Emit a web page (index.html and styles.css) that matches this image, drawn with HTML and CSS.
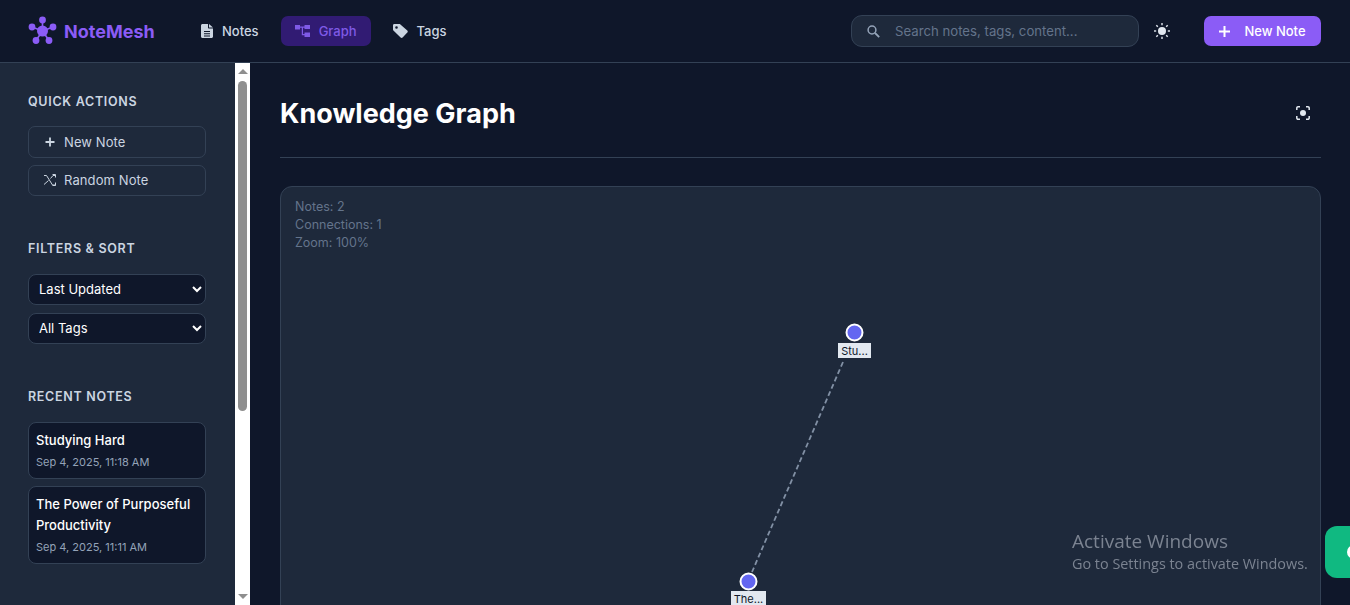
FILE: index.html
```html
<!DOCTYPE html>
<html lang="en">
<head>
    <meta charset="UTF-8">
    <meta name="viewport" content="width=device-width, initial-scale=1.0">
    <title>NoteMesh - Knowledge Graph</title>
    <link rel="stylesheet" href="styles.css">
</head>
<body>
    <header class="topbar">
        <a class="brand" href="#">
            <svg class="brand-icon" viewBox="0 0 30 30" width="30" height="30">
                <g stroke="#8b5cf6" stroke-width="1.6">
                    <line x1="14.5" y1="15" x2="14.5" y2="4"/>
                    <line x1="14.5" y1="15" x2="4" y2="11"/>
                    <line x1="14.5" y1="15" x2="25" y2="11"/>
                    <line x1="14.5" y1="15" x2="8" y2="24.5"/>
                    <line x1="14.5" y1="15" x2="21" y2="24.5"/>
                </g>
                <g fill="#8b5cf6">
                    <circle cx="14.5" cy="15" r="5.5"/>
                    <circle cx="14.5" cy="4" r="3.4"/>
                    <circle cx="4" cy="11" r="3.4"/>
                    <circle cx="25" cy="11" r="3.4"/>
                    <circle cx="8" cy="24.5" r="3.4"/>
                    <circle cx="21" cy="24.5" r="3.4"/>
                </g>
            </svg>
            <span>NoteMesh</span>
        </a>
        <nav class="nav">
            <a class="nav-link" href="#">
                <svg width="12" height="14" viewBox="0 0 12 14"><path fill="currentColor" fill-rule="evenodd" d="M1.5 0H7v3.5c0 .6.4 1 1 1h4v8c0 .8-.7 1.5-1.5 1.5h-9C.7 14 0 13.300 0 12.500v-11C0 .7.700 0 1.500 0zM8 0l4 3.500H8zM3 7v1h6V7zm0 2.200v1h6v-1zm0 2.200v1h6v-1z"/></svg>
                Notes
            </a>
            <a class="nav-link active" href="#">
                <svg width="15" height="12" viewBox="0 0 15 12"><path fill="currentColor" d="M0 0h5v4.500H0zM9.500 0H15v4H9.500zM9.500 7.500H15V12H9.500zM5 1.500h4.500v1.300H8V9h1.500v1.300H6.800V2.800H5z"/></svg>
                Graph
            </a>
            <a class="nav-link" href="#">
                <svg width="15" height="14" viewBox="0 0 15 14"><path fill="currentColor" fill-rule="evenodd" d="M0 1.300C0 .6.600 0 1.300 0h5.100c.4 0 .7.100 1 .400l6.900 6.200c.6.600.6 1.500 0 2l-4.700 4.900c-.6.600-1.500.6-2 0L.4 6.600C.1 6.300 0 6 0 5.600zM3.500 2.200a1.300 1.300 0 1 0 0 2.600 1.300 1.300 0 0 0 0-2.600z"/></svg>
                Tags
            </a>
        </nav>
        <div class="topbar-right">
            <label class="search">
                <svg width="13" height="13" viewBox="0 0 13 13"><circle cx="5" cy="5" r="3.900" fill="none" stroke="#94a3b8" stroke-width="1.500"/><line x1="8" y1="8" x2="12.200" y2="12.200" stroke="#94a3b8" stroke-width="1.800"/></svg>
                <input type="text" placeholder="Search notes, tags, content...">
            </label>
            <button class="icon-btn theme-btn" type="button">
                <svg width="16" height="16" viewBox="0 0 16 16">
                    <circle cx="8" cy="8" r="4" fill="#e2e8f0"/>
                    <g stroke="#e2e8f0" stroke-width="1.400">
                        <line x1="8" y1="0" x2="8" y2="2.200"/><line x1="8" y1="13.800" x2="8" y2="16"/>
                        <line x1="0" y1="8" x2="2.200" y2="8"/><line x1="13.800" y1="8" x2="16" y2="8"/>
                        <line x1="2.300" y1="2.300" x2="3.800" y2="3.800"/><line x1="12.200" y1="12.200" x2="13.700" y2="13.700"/>
                        <line x1="2.300" y1="13.700" x2="3.800" y2="12.200"/><line x1="12.200" y1="3.800" x2="13.700" y2="2.300"/>
                    </g>
                </svg>
            </button>
            <button class="new-note" type="button">
                <svg width="11" height="11" viewBox="0 0 11 11"><path stroke="#fff" stroke-width="2" d="M5.500 0v11M0 5.500h11"/></svg>
                New Note
            </button>
        </div>
    </header>

    <div class="layout">
        <aside class="sidebar">
            <div class="sidebar-body">
                <section class="side-section">
                    <h3>Quick Actions</h3>
                    <div class="side-stack">
                        <button class="side-btn" type="button">
                            <svg width="12" height="12" viewBox="-1.500 -1.500 12 12"><path stroke="#cbd5e1" stroke-width="1.800" d="M4.500 0v9M0 4.500h9"/></svg>
                            New Note
                        </button>
                        <button class="side-btn" type="button">
                            <svg width="12" height="12" viewBox="0 0 12 12"><path fill="none" stroke="#cbd5e1" stroke-width="1" d="M0 1.500h2.500l6 9.500H11.500M0 10.500l4.500-4M6.500 4.500L9 1.500h2.500M8.500 .5h3v3M8.500 11.500h3v-3"/></svg>
                            Random Note
                        </button>
                    </div>
                </section>
                <section class="side-section">
                    <h3>Filters &amp; Sort</h3>
                    <div class="side-stack filters">
                        <select class="side-select"><option>Last Updated</option></select>
                        <select class="side-select"><option>All Tags</option></select>
                    </div>
                </section>
                <section class="side-section recent">
                    <h3>Recent Notes</h3>
                    <div class="side-stack">
                        <div class="recent-note">
                            <div class="recent-title">Studying Hard</div>
                            <div class="recent-date">Sep 4, 2025, 11:18 AM</div>
                        </div>
                        <div class="recent-note">
                            <div class="recent-title">The Power of Purposeful Productivity</div>
                            <div class="recent-date">Sep 4, 2025, 11:11 AM</div>
                        </div>
                    </div>
                </section>
            </div>
            <div class="scrollbar">
                <span class="scroll-arrow up"></span>
                <span class="scroll-thumb"></span>
                <span class="scroll-arrow down"></span>
            </div>
        </aside>

        <main class="content">
            <div class="page-head">
                <h1>Knowledge Graph</h1>
                <button class="icon-btn" type="button">
                    <svg width="14" height="14" viewBox="0 0 14 14">
                        <path fill="none" stroke="#e2e8f0" stroke-width="1.500" d="M.8 4V2A1.200 1.200 0 0 1 2 .8h2M10 .8h2A1.200 1.200 0 0 1 13.200 2v2M13.200 10v2a1.200 1.200 0 0 1-1.200 1.200h-2M4 13.200H2A1.200 1.200 0 0 1 .8 12v-2"/>
                        <circle cx="7" cy="7" r="3" fill="#e2e8f0"/>
                    </svg>
                </button>
            </div>
            <div class="graph-card">
                <div class="graph-stats">
                    <div>Notes: 2</div>
                    <div>Connections: 1</div>
                    <div>Zoom: 100%</div>
                </div>
                <svg class="graph-canvas" width="1040" height="500">
                    <line class="edge" x1="562" y1="175" x2="471" y2="385"/>
                    <g>
                        <circle class="node" cx="573.500" cy="145.500" r="8"/>
                        <rect class="node-label-box" x="557" y="156" width="33" height="15"/>
                        <text class="node-label" x="573.500" y="168">Stu...</text>
                    </g>
                    <g>
                        <circle class="node" cx="467.500" cy="394.500" r="8"/>
                        <rect class="node-label-box" x="450" y="404" width="35" height="15"/>
                        <text class="node-label" x="467.500" y="416">The...</text>
                    </g>
                </svg>
            </div>
        </main>
    </div>

    <div class="activate">
        <div class="activate-title">Activate Windows</div>
        <div>Go to Settings to activate Windows.</div>
    </div>
    <button class="float-chat" type="button"></button>
</body>
</html>
```

FILE: styles.css
```css
* {
    box-sizing: border-box;
}
html, body {
    height: 100%;
}
body {
    margin: 0;
    overflow: hidden;
    font-family: Inter, "Liberation Sans", sans-serif;
    background-color: #0f172a;
    color: #e2e8f0;
    display: flex;
    flex-direction: column;
}
a {
    text-decoration: none;
    color: inherit;
}
button {
    font-family: inherit;
    cursor: pointer;
}

.topbar {
    height: 63px;
    flex-shrink: 0;
    display: flex;
    align-items: center;
    padding: 0 29px 0 28px;
    border-bottom: 1px solid #334155;
}
.brand {
    display: flex;
    align-items: center;
    gap: 6px;
    width: 159px;
    font-size: 18px;
    font-weight: 700;
    color: #8b5cf6;
}
.nav {
    display: flex;
    gap: 8px;
}
.nav-link {
    height: 30px;
    display: flex;
    align-items: center;
    gap: 9px;
    padding: 0 14px;
    border-radius: 7px;
    font-size: 13px;
    font-weight: 500;
    color: #cbd5e1;
}
.nav-link.active {
    background-color: #311b73;
    color: #7f5ae6;
}
.topbar-right {
    margin-left: auto;
    display: flex;
    align-items: center;
}
.search {
    width: 288px;
    height: 32px;
    display: flex;
    align-items: center;
    gap: 13px;
    padding: 0 15px;
    background-color: #1e293b;
    border: 1px solid #334155;
    border-radius: 11px;
}
.search input {
    flex: 1;
    min-width: 0;
    border: none;
    outline: none;
    background: none;
    font-family: inherit;
    font-size: 13.200px;
    color: #e2e8f0;
}
.search input::placeholder {
    color: #64748b;
}
.icon-btn {
    background: none;
    border: none;
    padding: 0;
    display: flex;
}
.theme-btn {
    margin: 0 34px 0 15px;
}
.new-note {
    width: 117px;
    height: 30px;
    display: flex;
    align-items: center;
    justify-content: center;
    gap: 14px;
    border: none;
    border-radius: 7px;
    background-color: #8b5cf6;
    color: #ffffff;
    font-size: 13px;
    font-weight: 500;
}

.layout {
    flex: 1;
    min-height: 0;
    display: flex;
}
.sidebar {
    width: 250px;
    flex-shrink: 0;
    display: flex;
    overflow: hidden;
}
.sidebar-body {
    flex: 1;
    min-width: 0;
    overflow: hidden;
    background-color: #1e293b;
    padding: 30px 29px 0 28px;
}
.scrollbar {
    width: 15px;
    flex-shrink: 0;
    display: flex;
    flex-direction: column;
    align-items: center;
    background-color: #ffffff;
}
.scroll-arrow {
    width: 0;
    height: 0;
    border-left: 5px solid transparent;
    border-right: 5px solid transparent;
}
.scroll-arrow.up {
    margin-top: 6px;
    border-bottom: 5px solid #8f8f8f;
}
.scroll-arrow.down {
    margin-top: auto;
    margin-bottom: 6px;
    border-top: 5px solid #8f8f8f;
}
.scroll-thumb {
    width: 9px;
    height: 330px;
    margin-top: 7px;
    border-radius: 5px;
    background-color: #8f8f8f;
}
.side-section {
    margin-bottom: 44px;
}
.side-section h3 {
    margin: 0 0 16px;
    font-size: 12.500px;
    line-height: 17px;
    font-weight: 600;
    letter-spacing: .7px;
    text-transform: uppercase;
    color: #cbd5e1;
}
.side-section.recent h3 {
    margin-bottom: 17.500px;
}
.side-stack {
    display: flex;
    flex-direction: column;
    gap: 7px;
}
.side-stack.filters {
    padding-top: 1px;
    gap: 8.500px;
}
.side-btn {
    height: 31.500px;
    display: flex;
    align-items: center;
    gap: 8px;
    padding: 0 15px;
    background: none;
    border: 1px solid #334155;
    border-radius: 7px;
    color: #cbd5e1;
    font-size: 13px;
    letter-spacing: .1px;
}
.side-select {
    height: 30.500px;
    padding: 0 6px;
    background-color: #0f172a;
    border: 1px solid #334155;
    border-radius: 8px;
    color: #ffffff;
    font-family: inherit;
    font-size: 13px;
}
.recent-note {
    padding: 7px 7px 8px;
    background-color: #0f172a;
    border: 1px solid #334155;
    border-radius: 8px;
}
.recent-title {
    font-size: 13px;
    font-weight: 500;
    line-height: 21px;
    color: #ffffff;
}
.recent-date {
    margin-top: 3px;
    font-size: 11px;
    line-height: 16px;
    color: #94a3b8;
}

.content {
    flex: 1;
    min-width: 0;
    padding: 30px 29px 0 30px;
    overflow: hidden;
}
.page-head {
    height: 65px;
    display: flex;
    justify-content: space-between;
    align-items: flex-start;
    border-bottom: 1px solid #334155;
    margin-bottom: 28px;
}
.page-head h1 {
    margin: 0;
    font-size: 27px;
    line-height: 42px;
    font-weight: 700;
    color: #ffffff;
}
.page-head .icon-btn {
    margin: 13px 11px 0 0;
}
.graph-card {
    position: relative;
    height: 560px;
    background-color: #1e293b;
    border: 1px solid #334155;
    border-radius: 12px;
    overflow: hidden;
}
.graph-stats {
    position: absolute;
    left: 14px;
    top: 11px;
    font-size: 12.500px;
    line-height: 18px;
    color: #64748b;
}
.graph-canvas {
    display: block;
}
.edge {
    stroke: #94a3b8;
    stroke-width: 1.800;
    stroke-dasharray: 5 3;
    opacity: .85;
}
.node {
    fill: #6366f1;
    stroke: #ffffff;
    stroke-width: 2;
}
.node-label-box {
    fill: #e2e8f0;
}
.node-label {
    font-size: 11px;
    fill: #0f172a;
    text-anchor: middle;
}

.activate {
    position: fixed;
    left: 1072px;
    top: 530px;
    font-family: "Open Sans", sans-serif;
    font-size: 14.400px;
    line-height: 21px;
    color: #7b8391;
}
.activate-title {
    font-size: 19px;
    line-height: 23px;
}
.float-chat {
    position: fixed;
    left: 1325px;
    top: 526px;
    width: 60px;
    height: 52px;
    border: none;
    border-radius: 12px;
    background-color: #10b981;
}
.float-chat::after {
    content: "";
    position: absolute;
    left: 22px;
    top: 19px;
    width: 14px;
    height: 14px;
    border-radius: 50%;
    background-color: #ffffff;
}
```
